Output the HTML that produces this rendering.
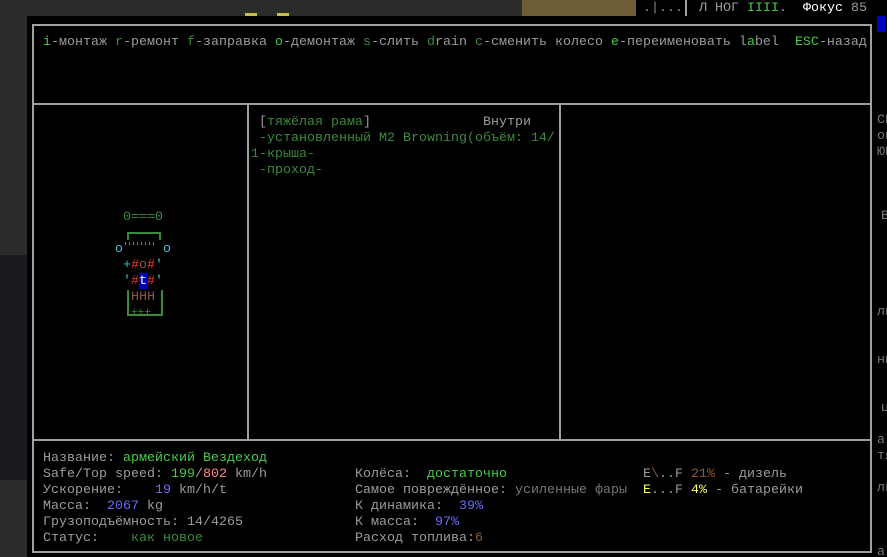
<!DOCTYPE html>
<html><head><meta charset="utf-8"><style>
*{margin:0;padding:0;box-sizing:border-box}
html,body{width:887px;height:557px;overflow:hidden;background:#000}
body{position:relative;font-family:"Liberation Mono","DejaVu Sans Mono",monospace;font-size:13.33px;line-height:16px;color:#9c9c9c}
.a{position:absolute;white-space:pre}
.t{margin-top:2px}
.ln{position:absolute;background:#a0a0a0}
.g{color:#3a8a3a}.G{color:#46cc46}.b{color:#6a6aff}.r{color:#ff8a80}.br{color:#8b5a3a}.y{color:#ffff60}.dg{color:#777}.c{color:#40c0c8}
</style></head><body>
<div class="a" style="left:0;top:0;width:522px;height:16px;background:#2c2c2c"></div>
<div class="a" style="left:0;top:0;width:27px;height:255px;background:#2c2c2c"></div>
<div class="a" style="left:0;top:255px;width:27px;height:225px;background:#1c1920"></div>
<div class="a" style="left:0;top:480px;width:27px;height:77px;background:#2c2c2c"></div>
<div class="a" style="left:522px;top:0;width:114px;height:16px;background:#6e5c36"></div>
<div class="a" style="left:245px;top:13px;width:12px;height:4px;background:#c8c040"></div>
<div class="a" style="left:277px;top:13px;width:12px;height:4px;background:#c8c040"></div>
<div class="a" style="left:643px;top:1px;color:#888">.|...</div>
<div class="ln" style="left:685px;top:0;width:2px;height:16px"></div>
<div class="a" style="left:699px;top:1px">Л НОГ <span class="G">IIII</span>.  <span style="color:#fff">Фокус</span> 85</div>
<div class="a" style="left:877px;top:16px;width:8px;height:16px;background:#0000c0"></div>
<div class="a" style="left:27px;top:16px;width:849px;height:541px;background:#000"></div>
<div class="a" style="left:32px;top:24px;width:840px;height:529px;border:2px solid #a0a0a0"></div>
<div class="ln" style="left:32px;top:103px;width:840px;height:2px"></div>
<div class="ln" style="left:32px;top:439px;width:840px;height:2px"></div>
<div class="ln" style="left:247px;top:104px;width:2px;height:336px"></div>
<div class="ln" style="left:559px;top:104px;width:2px;height:336px"></div>
<div class="a t" style="left:43px;top:33px"><span class="G">i</span>-монтаж <span class="g">r</span>-ремонт <span class="g">f</span>-заправка <span class="G">o</span>-демонтаж <span class="g">s</span>-слить <span class="g">d</span>rain <span class="g">c</span>-сменить колесо <span class="G">e</span>-переименовать l<span class="G">a</span>bel  <span class="G">ESC</span>-назад</div>
<div class="a t" style="left:259px;top:113px">[<span class="g">тяжёлая рама</span>]              Внутри</div>
<div class="a g t" style="left:259px;top:129px">-установленный M2 Browning(объём: 14/</div>
<div class="a g t" style="left:251px;top:145px">1-крыша-</div>
<div class="a g t" style="left:259px;top:161px">-проход-</div>
<div class="a dg" style="left:877px;top:113px">СВ
он
ЮВ</div>
<div class="a dg" style="left:881px;top:209px">В</div>
<div class="a dg" style="left:877px;top:305px">лн</div>
<div class="a dg" style="left:877px;top:353px">нц</div>
<div class="a dg" style="left:881px;top:401px">ц</div>
<div class="a dg" style="left:877px;top:433px">а
тя</div>
<div class="a dg" style="left:877px;top:481px">ль</div>
<div class="a dg" style="left:877px;top:545px">а</div>
<div class="a g t" style="left:123px;top:208px">0===0</div>
<div class="a" style="left:127px;top:232px;width:34px;height:8px;border:2px solid #3a8a3a;border-bottom:none"></div>
<div class="a c t" style="left:115px;top:240px">o</div>
<div class="a" style="left:125px;top:242px;width:32px;height:3px;background:repeating-linear-gradient(90deg,#7070ff 0 1px,transparent 1px 4px)"></div>
<div class="a c t" style="left:163px;top:240px">o</div>
<div class="a t" style="left:123px;top:256px"><span class="c">+</span><span style="color:#ff3030">#</span><span class="br">o</span><span style="color:#ff3030">#</span><span class="c">'</span></div>
<div class="a" style="left:139px;top:273px;width:8px;height:16px;background:#0000c0"></div>
<div class="a t" style="left:123px;top:272px"><span class="c">'</span><span style="color:#ff3030">#</span><span style="color:#fff">t</span><span style="color:#ff3030">#</span><span class="c">'</span></div>
<div class="a" style="left:127px;top:290px;width:36px;height:26px;border:2px solid #3a8a3a;border-top:none"></div>
<div class="a br t" style="left:131px;top:288px">HHH</div>
<div class="a g" style="left:131px;top:305px;font-size:11px">+++</div>
<div class="a t" style="left:43px;top:449px">Название: <span class="G">армейский Вездеход</span>
Safe/Top speed: <span class="G">199</span>/<span class="r">802</span> km/h
Ускорение:    <span class="b">19</span> km/h/t
Масса:  <span class="b">2067</span> kg
Грузоподъёмность: 14/4265
Статус:    <span class="g">как новое</span></div>
<div class="a t" style="left:355px;top:465px">Колёса:  <span class="G">достаточно</span>
Самое повреждённое: <span class="dg">усиленные фары</span>
К динамика:  <span class="b">39%</span>
К масса:  <span class="b">97%</span>
Расход топлива:<span class="br">6</span></div>
<div class="a t" style="left:643px;top:465px">E<span class="br">\</span>..F <span class="br">21%</span> - дизель
<span class="y">E</span>...F <span class="y">4%</span> - батарейки</div>
</body></html>
